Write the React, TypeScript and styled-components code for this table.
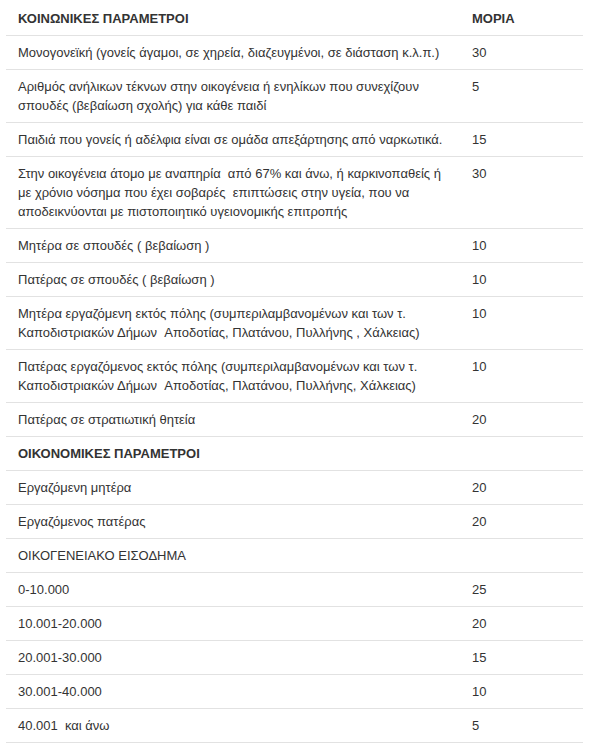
import React from "react";
import styled, { createGlobalStyle } from "styled-components";

const GlobalStyle = createGlobalStyle`
  html, body { margin: 0; padding: 0; background: #ffffff; }
  body { font-family: "Liberation Sans", Arial, sans-serif; color: #333333; }
`;

const Page = styled.div`
  padding: 2px 6px 0 6px;
`;

const Table = styled.table`
  width: 577px;
  border-collapse: collapse;
  border-spacing: 0;
  table-layout: fixed;
  font-size: 13px;
  line-height: 19px;
  color: #333333;
`;

const Cell = styled.td<{ $bold?: boolean }>`
  padding: 7px 12px 7px 12px;
  vertical-align: top;
  text-align: left;
  border-bottom: 1px solid #e2e2e2;
  font-weight: ${(p) => (p.$bold ? 700 : 400)};
`;

const HeadCell = styled.th`
  padding: 7px 12px 7px 12px;
  vertical-align: top;
  text-align: left;
  font-weight: 700;
  border-bottom: 1px solid #e2e2e2;
`;

type Row = { label: string; value: string; bold?: boolean };

const nb = "\u00a0";

const rows: Row[] = [
  { label: "Μονογονεϊκή (γονείς άγαμοι, σε χηρεία, διαζευγμένοι, σε διάσταση κ.λ.π.)", value: "30" },
  { label: "Αριθμός ανήλικων τέκνων στην οικογένεια ή ενηλίκων που συνεχίζουν σπουδές (βεβαίωση σχολής) για κάθε παιδί", value: "5" },
  { label: "Παιδιά που γονείς ή αδέλφια είναι σε ομάδα απεξάρτησης από ναρκωτικά.", value: "15" },
  { label: `Στην οικογένεια άτομο με αναπηρία ${nb}από 67% και άνω, ή καρκινοπαθείς ή με χρόνιο νόσημα που έχει σοβαρές ${nb}επιπτώσεις στην υγεία, που να αποδεικνύονται με πιστοποιητικό υγειονομικής επιτροπής`, value: "30" },
  { label: "Μητέρα σε σπουδές ( βεβαίωση )", value: "10" },
  { label: "Πατέρας σε σπουδές ( βεβαίωση )", value: "10" },
  { label: `Μητέρα εργαζόμενη εκτός πόλης (συμπεριλαμβανομένων και των τ. Καποδιστριακών Δήμων ${nb}Αποδοτίας, Πλατάνου, Πυλλήνης , Χάλκειας)`, value: "10" },
  { label: `Πατέρας εργαζόμενος εκτός πόλης (συμπεριλαμβανομένων και των τ. Καποδιστριακών Δήμων ${nb}Αποδοτίας, Πλατάνου, Πυλλήνης, Χάλκειας)`, value: "10" },
  { label: "Πατέρας σε στρατιωτική θητεία", value: "20" },
  { label: "ΟΙΚΟΝΟΜΙΚΕΣ ΠΑΡΑΜΕΤΡΟΙ", value: "", bold: true },
  { label: "Εργαζόμενη μητέρα", value: "20" },
  { label: "Εργαζόμενος πατέρας", value: "20" },
  { label: "ΟΙΚΟΓΕΝΕΙΑΚΟ ΕΙΣΟΔΗΜΑ", value: "" },
  { label: "0-10.000", value: "25" },
  { label: "10.001-20.000", value: "20" },
  { label: "20.001-30.000", value: "15" },
  { label: "30.001-40.000", value: "10" },
  { label: `40.001 ${nb}και άνω`, value: "5" },
];

export default function App() {
  return (
    <>
      <GlobalStyle />
      <Page>
        <Table>
          <colgroup>
            <col style={{ width: 454 }} />
            <col />
          </colgroup>
          <thead>
            <tr>
              <HeadCell>ΚΟΙΝΩΝΙΚΕΣ ΠΑΡΑΜΕΤΡΟΙ</HeadCell>
              <HeadCell>ΜΟΡΙΑ</HeadCell>
            </tr>
          </thead>
          <tbody>
            {rows.map((r, i) => (
              <tr key={i}>
                <Cell $bold={r.bold}>{r.label}</Cell>
                <Cell>{r.value}</Cell>
              </tr>
            ))}
          </tbody>
        </Table>
      </Page>
    </>
  );
}
